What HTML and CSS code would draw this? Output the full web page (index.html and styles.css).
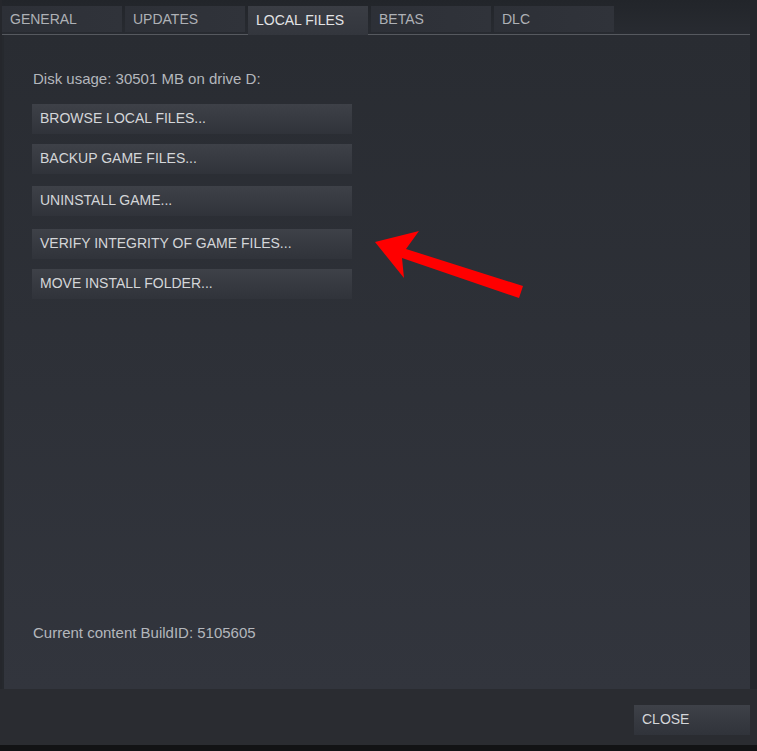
FILE: index.html
```html
<!DOCTYPE html>
<html>
<head>
<meta charset="utf-8">
<link rel="stylesheet" href="styles.css">
</head>
<body>
<div class="window">
  <div class="tabbar">
    <div class="tab">GENERAL</div>
    <div class="tab">UPDATES</div>
    <div class="tab active">LOCAL FILES</div>
    <div class="tab">BETAS</div>
    <div class="tab">DLC</div>
  </div>
  <div class="panel">
    <div class="disk">Disk usage: 30501 MB on drive D:</div>
    <div class="actions">
      <div class="btn">BROWSE LOCAL FILES...</div>
      <div class="btn">BACKUP GAME FILES...</div>
      <div class="btn gap2">UNINSTALL GAME...</div>
      <div class="btn gap3">VERIFY INTEGRITY OF GAME FILES...</div>
      <div class="btn">MOVE INSTALL FOLDER...</div>
    </div>
    <div class="build">Current content BuildID: 5105605</div>
    <svg class="arrow" width="160" height="80" viewBox="365 225 160 80">
      <polygon points="373,242 417,231 404,249 521,286 517,298 400,258 402,278" fill="#ff0000"/>
    </svg>
  </div>
  <div class="footer">
    <div class="btn close">CLOSE</div>
  </div>
  <div class="bottomstrip"></div>
</div>
</body>
</html>
```

FILE: styles.css
```css
html, body {
  margin: 0;
  padding: 0;
  background: #25272c;
  font-family: "Liberation Sans", Arial, sans-serif;
  font-size: 14px;
}
.window {
  width: 757px;
  height: 751px;
  display: flex;
  flex-direction: column;
  background: #25272c;
}
.tabbar {
  height: 34px;
  margin: 0 7px 0 2px;
  display: flex;
  align-items: flex-end;
  gap: 3px;
  border-bottom: 1px solid #56595f;
  background: linear-gradient(#22252a, #282b31);
}
.tab {
  width: 120px;
  height: 26px;
  margin-bottom: 2px;
  box-sizing: border-box;
  padding-left: 8px;
  line-height: 26px;
  color: #aeb1b6;
  background: linear-gradient(90deg, #2d3037, #30333a);
}
.tab.active {
  height: 29px;
  margin-bottom: -1px;
  line-height: 28px;
  color: #e2e3e5;
  background: linear-gradient(#3a3d44, #33363d);
  position: relative;
  z-index: 1;
}
.panel {
  position: relative;
  height: 654px;
  margin: 0 7px 0 2px;
  box-sizing: border-box;
  padding: 35px 0 48px 28px;
  display: flex;
  flex-direction: column;
  border-left: 2px solid #26292e;
  background: linear-gradient(#292c32, #32353d);
}
.disk, .build {
  color: #b4b7bc;
  font-size: 15px;
  line-height: 17px;
  padding-left: 1px;
}
.actions {
  margin-top: 17px;
  display: flex;
  flex-direction: column;
  gap: 10px;
}
.btn {
  width: 320px;
  height: 30px;
  box-sizing: border-box;
  padding-left: 8px;
  line-height: 29px;
  color: #d4d6d9;
  background: linear-gradient(#3e4148, #30333a);
}
.gap2 { margin-top: 2px; }
.gap3 { margin-top: 3px; }
.build {
  margin-top: auto;
}
.arrow {
  position: absolute;
  left: 363px;
  top: 190px;
}
.footer {
  height: 56px;
  display: flex;
  justify-content: flex-end;
  align-items: flex-start;
  padding: 16px 7px 0 0;
  box-sizing: border-box;
  background: #2a2c31;
}
.btn.close {
  width: 116px;
}
.bottomstrip {
  height: 6px;
  background: #121315;
}
```
